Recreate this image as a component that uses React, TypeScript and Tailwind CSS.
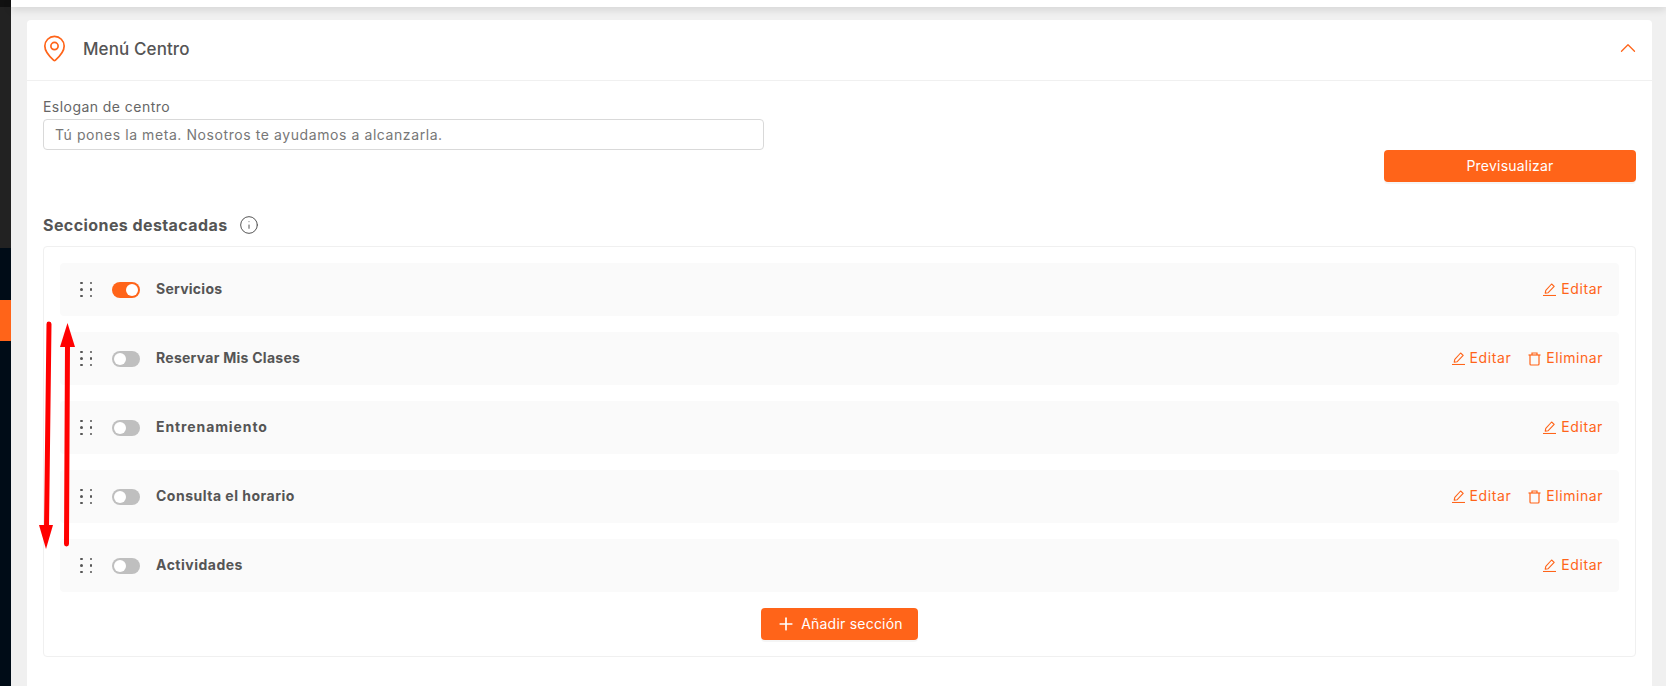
import React from 'react';
import { ChevronUp, Info, MapPin, Plus } from 'lucide-react';

interface Section {
  name: string;
  active?: boolean;
  removable?: boolean;
  nameTracking: string;
}

const sections: Section[] = [
  { name: 'Servicios', active: true, nameTracking: 'tracking-[0.25px]' },
  { name: 'Reservar Mis Clases', removable: true, nameTracking: 'tracking-[0.26px]' },
  { name: 'Entrenamiento', nameTracking: 'tracking-[0.9px]' },
  { name: 'Consulta el horario', removable: true, nameTracking: 'tracking-[0.5px]' },
  { name: 'Actividades', nameTracking: 'tracking-[0.5px]' },
];

const PencilIcon = () => (
  <svg width="13" height="13" viewBox="0 0 13 13" fill="none" stroke="#ff6419" strokeWidth="1.1" className="shrink-0">
    <path d="M2.2 10.2 L2.8 7.4 L8.6 1 L11.2 3.4 L5.2 9.7 Z" strokeLinejoin="round" />
    <path d="M0 12.5 H13" />
  </svg>
);

const TrashIcon = () => (
  <svg width="13" height="14" viewBox="0 0 13 14" fill="none" stroke="#ff6419" strokeWidth="1.2" className="shrink-0">
    <path d="M0.5 3 H12.5" />
    <path d="M4 3 V1 H9 V3" />
    <path d="M2 3 V12 Q2 13 3 13 H10 Q11 13 11 12 V3" />
  </svg>
);

const DragHandle = () => (
  <div className="grid grid-cols-2 gap-x-[7px] gap-y-[4px] w-[12px] shrink-0">
    {Array.from({ length: 6 }).map((_, i) => (
      <span key={i} className="w-[2.5px] h-[2.5px] rounded-full bg-[#555555]" />
    ))}
  </div>
);

const Toggle = ({ on }: { on?: boolean }) => (
  <div
    className={`w-[28px] h-[16px] rounded-full flex items-center px-[2px] shrink-0 ${
      on ? 'bg-[#ff6419] justify-end' : 'bg-[#bfbfbf] justify-start'
    }`}
  >
    <span className="w-[12px] h-[12px] rounded-full bg-white" />
  </div>
);

const RowAction = ({ icon, label, tracking }: { icon: React.ReactNode; label: string; tracking: string }) => (
  <button className={`flex items-center gap-[5px] text-[14px] text-[#ff6419] ${tracking}`}>
    {icon}
    <span className="mb-[2px]">{label}</span>
  </button>
);

const SectionRow = ({ section }: { section: Section }) => (
  <div className="h-[53px] rounded-[4px] bg-[#fafafa] flex items-center pl-[20px] pr-[16px]">
    <DragHandle />
    <div className="ml-[20px]">
      <Toggle on={section.active} />
    </div>
    <span className={`ml-[16px] mb-[2px] text-[14px] font-bold text-[#555555] ${section.nameTracking}`}>{section.name}</span>
    <div className="ml-auto flex items-center gap-[17px]">
      <RowAction icon={<PencilIcon />} label="Editar" tracking="tracking-[0.6px]" />
      {section.removable && <RowAction icon={<TrashIcon />} label="Eliminar" tracking="tracking-[0.55px]" />}
    </div>
  </div>
);

// Red annotation arrows drawn over the screenshot
const Arrows = () => (
  <svg className="absolute left-0 top-0 pointer-events-none" width="90" height="560" fill="none">
    <path d="M49 324 L46.5 528" stroke="#ff0000" strokeWidth="5" strokeLinecap="round" />
    <polygon points="39,525 53,525 46,549" fill="#ff0000" />
    <path d="M66.5 544 L67.5 345" stroke="#ff0000" strokeWidth="5" strokeLinecap="round" />
    <polygon points="60,347 75,347 67.5,323" fill="#ff0000" />
  </svg>
);

export default function App() {
  return (
    <div className="relative flex h-[686px] w-[1666px] overflow-hidden bg-[#f0f0f0] font-['Inter',sans-serif]">
      <aside className="w-[11px] shrink-0 flex flex-col bg-[#000c17]">
        <div className="h-[7px] bg-[#111111]" />
        <div className="h-[241px] bg-[#222222]" />
        <div className="h-[52px]" />
        <div className="h-[41px] bg-[#ff6419]" />
      </aside>

      <div className="flex-1 flex flex-col min-w-0">
        <div className="h-[7px] bg-white shadow-[0_2px_8px_rgba(0,0,0,0.15)] relative" />
        <main className="flex-1 mt-[13px] ml-[16px] mr-[14px] bg-white rounded-t-[4px]">
          <header className="h-[61px] border-b border-[#f0f0f0] flex items-center pl-[13px] pr-[11px]">
            <MapPin size={29} strokeWidth={1.4} color="#ff6419" className="shrink-0 mb-[3px]" />
            <h1 className="ml-[14px] text-[17px] font-medium text-[#555555] tracking-[0.1px]">Menú Centro</h1>
            <ChevronUp size={26} strokeWidth={1.2} color="#ff6419" className="ml-auto mb-[5px]" />
          </header>

          <div className="px-[16px]">
            <div className="flex justify-between items-start pt-[15px]">
              <div className="w-[721px]">
                <label className="block h-[23px] leading-[22px] text-[14px] text-[#666666] tracking-[0.45px]">Eslogan de centro</label>
                <div className="h-[31px] rounded-[4px] border border-[#d9d9d9] bg-white flex items-center px-[11px] text-[14px] text-[#777777] tracking-[0.58px]">
                  Tú pones la meta. Nosotros te ayudamos a alcanzarla.
                </div>
              </div>
              <button className="mt-[54px] w-[252px] h-[32px] rounded-[4px] bg-[#ff6419] text-white text-[14px] tracking-[0.22px] pb-[2px] shadow-[0_2px_0_rgba(0,0,0,0.04)]">
                Previsualizar
              </button>
            </div>

            <div className="mt-[33px] h-[22px] flex items-center">
              <h2 className="text-[16px] font-bold text-[#555555] tracking-[0.42px] mb-[2px]">Secciones destacadas</h2>
              <Info size={20} strokeWidth={1.2} color="#555555" className="ml-[11px] mb-[2px]" />
            </div>

            <div className="mt-[9px] h-[411px] rounded-[4px] border border-[#f0f0f0] p-[16px] flex flex-col gap-[16px]">
              {sections.map((section) => (
                <SectionRow key={section.name} section={section} />
              ))}
              <div className="flex justify-center">
                <button className="w-[157px] h-[32px] rounded-[4px] bg-[#ff6419] text-white text-[14px] tracking-[0.22px] flex items-center justify-center gap-[5px] shadow-[0_2px_0_rgba(0,0,0,0.04)]">
                  <Plus size={20} strokeWidth={2} />
                  <span className="mb-[2px]">Añadir sección</span>
                </button>
              </div>
            </div>
          </div>
        </main>
      </div>

      <Arrows />
    </div>
  );
}
